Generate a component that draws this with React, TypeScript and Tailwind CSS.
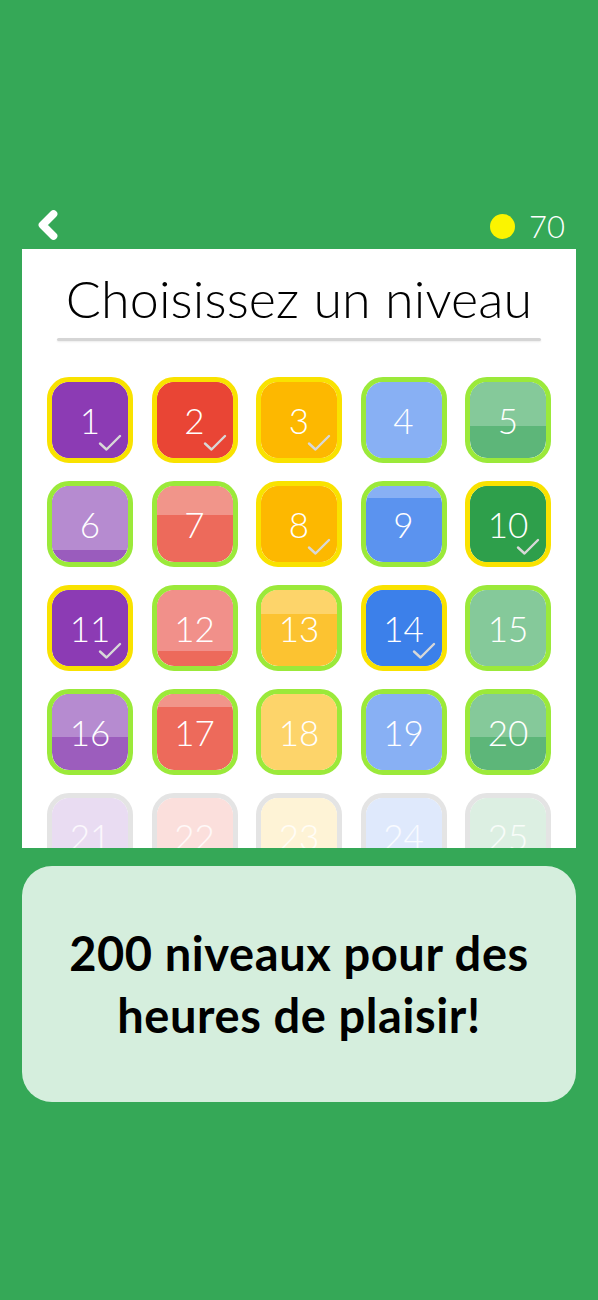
import { ChevronLeft } from "lucide-react";

type Tile = {
  n: number;
  top: string;
  bottom: string;
  split: string;
  border: string;
  done?: boolean;
  faded?: boolean;
};

const YELLOW = "border-[#f9e200]";
const LIME = "border-[#9be93a]";
const GREY = "border-[#e4e4e4]";

const tiles: Tile[] = [
  { n: 1, top: "bg-[#8c3bb4]", bottom: "bg-[#8c3bb4]", split: "h-full", border: YELLOW, done: true },
  { n: 2, top: "bg-[#e94535]", bottom: "bg-[#e94535]", split: "h-full", border: YELLOW, done: true },
  { n: 3, top: "bg-[#fdb800]", bottom: "bg-[#fdb800]", split: "h-full", border: YELLOW, done: true },
  { n: 4, top: "bg-[#88b0f4]", bottom: "bg-[#88b0f4]", split: "h-full", border: LIME },
  { n: 5, top: "bg-[#85c99a]", bottom: "bg-[#5db679]", split: "h-[58%]", border: LIME },
  { n: 6, top: "bg-[#b68bd0]", bottom: "bg-[#9a5cbd]", split: "h-[84%]", border: LIME },
  { n: 7, top: "bg-[#f1958a]", bottom: "bg-[#ed6a5b]", split: "h-[38%]", border: LIME },
  { n: 8, top: "bg-[#fdb800]", bottom: "bg-[#fdb800]", split: "h-full", border: YELLOW, done: true },
  { n: 9, top: "bg-[#88b0f4]", bottom: "bg-[#5b93ef]", split: "h-[16%]", border: LIME },
  { n: 10, top: "bg-[#2e9f4b]", bottom: "bg-[#2e9f4b]", split: "h-full", border: YELLOW, done: true },
  { n: 11, top: "bg-[#8c3bb4]", bottom: "bg-[#8c3bb4]", split: "h-full", border: YELLOW, done: true },
  { n: 12, top: "bg-[#f1908a]", bottom: "bg-[#ed6a5b]", split: "h-[80%]", border: LIME },
  { n: 13, top: "bg-[#fdd46a]", bottom: "bg-[#fcc331]", split: "h-[32%]", border: LIME },
  { n: 14, top: "bg-[#3c80ea]", bottom: "bg-[#3c80ea]", split: "h-full", border: YELLOW, done: true },
  { n: 15, top: "bg-[#85c99a]", bottom: "bg-[#85c99a]", split: "h-full", border: LIME },
  { n: 16, top: "bg-[#b68bd0]", bottom: "bg-[#9c5dbd]", split: "h-[57%]", border: LIME },
  { n: 17, top: "bg-[#f1958a]", bottom: "bg-[#ed6a5b]", split: "h-[17%]", border: LIME },
  { n: 18, top: "bg-[#fdd46a]", bottom: "bg-[#fdd46a]", split: "h-full", border: LIME },
  { n: 19, top: "bg-[#88b0f4]", bottom: "bg-[#88b0f4]", split: "h-full", border: LIME },
  { n: 20, top: "bg-[#85c99a]", bottom: "bg-[#5db679]", split: "h-[57%]", border: LIME },
  { n: 21, top: "bg-[#e9dcf2]", bottom: "bg-[#e9dcf2]", split: "h-full", border: GREY, faded: true },
  { n: 22, top: "bg-[#fbdfdc]", bottom: "bg-[#fbdfdc]", split: "h-full", border: GREY, faded: true },
  { n: 23, top: "bg-[#fef3d6]", bottom: "bg-[#fef3d6]", split: "h-full", border: GREY, faded: true },
  { n: 24, top: "bg-[#dfe9fc]", bottom: "bg-[#dfe9fc]", split: "h-full", border: GREY, faded: true },
  { n: 25, top: "bg-[#dcefe2]", bottom: "bg-[#dcefe2]", split: "h-full", border: GREY, faded: true },
];

function Check() {
  return (
    <svg className="absolute right-[6px] bottom-[6px]" width="24" height="18" viewBox="0 0 24 18" fill="none">
      <path d="M2 9.5 L8.5 15.5 L22 2" stroke="#d8d8d8" strokeWidth="2.4" strokeLinecap="round" strokeLinejoin="round" />
    </svg>
  );
}

function LevelTile({ t }: { t: Tile }) {
  return (
    <div className={`w-[86px] h-[86px] rounded-[22px] border-[5px] ${t.border} overflow-hidden`}>
      <div className={`relative w-full h-full rounded-[17px] overflow-hidden ${t.bottom}`}>
        <div className={`absolute left-0 right-0 top-0 ${t.split} ${t.top}`} />
        <span
          className={`absolute inset-0 flex items-center justify-center text-[35px] font-light ${
            t.faded ? "text-white/80" : "text-white"
          }`}
        >
          {t.n}
        </span>
        {t.done && <Check />}
      </div>
    </div>
  );
}

export default function App() {
  return (
    <div className="w-full h-[1300px] bg-[#35a857] font-['Lato',sans-serif] overflow-hidden">
      {/* Top bar */}
      <div className="h-[249px] flex items-end justify-between px-[34px] pb-[3px]">
        <ChevronLeft className="h-[44px] w-[44px] text-white -ml-[8px] -mb-[1px]" strokeWidth={4.2} />
        <div className="flex items-center gap-[14px] mb-[4px] -mr-[1px]">
          <div className="w-[25px] h-[25px] rounded-full bg-[#fbf400]" />
          <span className="text-white text-[31px] font-light leading-none">70</span>
        </div>
      </div>

      {/* Levels panel */}
      <div className="mx-[22px] h-[599px] bg-white overflow-hidden">
        <h1 className="pt-[19px] text-center text-[52px] font-light text-black leading-[60px] tracking-[0.1px]">
          Choisissez un niveau
        </h1>
        <div className="mx-[35px] mt-[10px] h-[3px] rounded-full bg-[#d5d5d5] shadow-[0_1px_2px_rgba(0,0,0,0.08)]" />
        <div className="grid grid-cols-5 gap-x-[18.5px] gap-y-[18px] px-[25px] mt-[36px]">
          {tiles.map((t) => (
            <LevelTile key={t.n} t={t} />
          ))}
        </div>
      </div>

      {/* Info card */}
      <div className="mx-[22px] mt-[18px] h-[236px] rounded-[30px] bg-[#d5eedd] flex items-center justify-center">
        <p className="text-center text-[47px] font-bold leading-[62px] tracking-[0.6px] text-black">
          200 niveaux pour des
          <br />
          heures de plaisir!
        </p>
      </div>
    </div>
  );
}
